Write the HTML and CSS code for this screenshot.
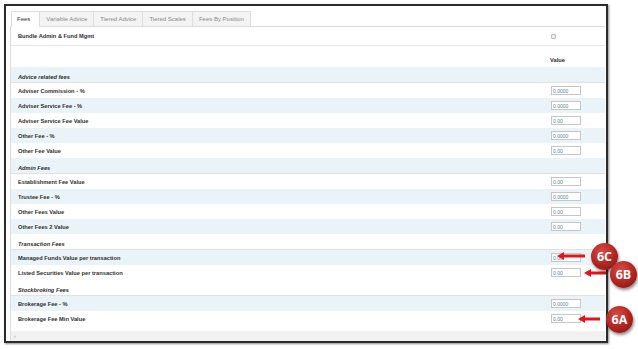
FILE: index.html
```html
<!DOCTYPE html>
<html lang="en">
<head>
    <meta charset="UTF-8">
    <meta name="viewport" content="width=device-width, initial-scale=1.0">
    <title>Fees</title>
    <link rel="stylesheet" href="styles.css">
</head>
<body>
    <div class="frame">
        <ul class="tabs">
            <li class="tab active">Fees</li>
            <li class="tab">Variable Advice</li>
            <li class="tab">Tiered Advice</li>
            <li class="tab">Tiered Scales</li>
            <li class="tab">Fees By Position</li>
        </ul>
        <div class="panel">
            <div class="row top">
                <span class="label">Bundle Admin &amp; Fund Mgmt</span>
                <span class="val"><span class="check"></span></span>
            </div>
            <div class="row colhead">
                <span class="label"></span>
                <span class="val">Value</span>
            </div>

            <!-- Advice -->
            <div class="row group alt"><span class="label">Advice related fees</span></div>
            <div class="row"><span class="label">Adviser Commission - %</span><span class="val"><input type="text" value="0.0000"></span></div>
            <div class="row alt"><span class="label">Adviser Service Fee - %</span><span class="val"><input type="text" value="0.0000"></span></div>
            <div class="row"><span class="label">Adviser Service Fee Value</span><span class="val"><input type="text" value="0.00"></span></div>
            <div class="row alt"><span class="label">Other Fee - %</span><span class="val"><input type="text" value="0.0000"></span></div>
            <div class="row"><span class="label">Other Fee Value</span><span class="val"><input type="text" value="0.00"></span></div>

            <!-- Admin -->
            <div class="row group alt"><span class="label">Admin Fees</span></div>
            <div class="row"><span class="label">Establishment Fee Value</span><span class="val"><input type="text" value="0.00"></span></div>
            <div class="row alt"><span class="label">Trustee Fee - %</span><span class="val"><input type="text" value="0.0000"></span></div>
            <div class="row"><span class="label">Other Fees Value</span><span class="val"><input type="text" value="0.00"></span></div>
            <div class="row alt"><span class="label">Other Fees 2 Value</span><span class="val"><input type="text" value="0.00"></span></div>

            <!-- Transaction -->
            <div class="row group"><span class="label">Transaction Fees</span></div>
            <div class="row alt"><span class="label">Managed Funds Value per transaction</span><span class="val"><input type="text" value="0.00"></span></div>
            <div class="row"><span class="label">Listed Securities Value per transaction</span><span class="val"><input type="text" value="0.00"></span></div>

            <!-- Stockbroking -->
            <div class="row group"><span class="label">Stockbroking Fees</span></div>
            <div class="row alt"><span class="label">Brokerage Fee - %</span><span class="val"><input type="text" value="0.0000"></span></div>
            <div class="row"><span class="label">Brokerage Fee Min Value</span><span class="val"><input type="text" value="0.00"></span></div>

            <div class="spacer"></div>
            <div class="hscroll">&#8249;</div>
        </div>
    </div>

    <!-- callouts -->
    <svg class="arrow arrow-6c" width="28" height="8" viewBox="0 0 28 8"><path d="M0 4 L7 0 L7 2.5 L28 2.5 L28 5.5 L7 5.5 L7 8 Z"/></svg>
    <svg class="arrow arrow-6b" width="22" height="8" viewBox="0 0 22 8"><path d="M0 4 L7 0 L7 2.5 L22 2.5 L22 5.5 L7 5.5 L7 8 Z"/></svg>
    <svg class="arrow arrow-6a" width="22" height="8" viewBox="0 0 22 8"><path d="M0 4 L7 0 L7 2.5 L22 2.5 L22 5.5 L7 5.5 L7 8 Z"/></svg>
    <div class="badge badge-6c">6C</div>
    <div class="badge badge-6b">6B</div>
    <div class="badge badge-6a">6A</div>
</body>
</html>
```

FILE: styles.css
```css
* {
    box-sizing: border-box;
}

body {
    margin: 0;
    padding: 4px;
    background-color: #fff;
    font-family: "Liberation Sans", Arial, sans-serif;
    position: relative;
    height: 349px;
    overflow: hidden;
}

.frame {
    width: 604px;
    height: 339px;
    border: 2px solid #2b2b2b;
    box-shadow: 1px 1px 2px rgba(0, 0, 0, 0.45);
    padding: 5px 1px 0 4px;
    display: flex;
    flex-direction: column;
}

.tabs {
    display: flex;
    list-style: none;
    margin: 0;
    padding: 0 0 0 1px;
    height: 15px;
}

.tab {
    border: 1px solid #ddd;
    border-bottom: none;
    margin-right: -1px;
    background-color: #f3f3f3;
    color: #8a8a8a;
    font-size: 6px;
    line-height: 14px;
    padding: 0 6px;
}

.tab.active {
    background-color: #fff;
    color: #333;
    padding: 0 9px 0 5px;
    height: 16px;
    position: relative;
    z-index: 1;
}

.panel {
    flex: 1;
    border-top: 1px solid #ddd;
    border-left: 1px solid #ddd;
    display: flex;
    flex-direction: column;
}

.row {
    display: grid;
    grid-template-columns: 1fr 55px;
    align-items: center;
    height: 15px;
    font-size: 5.7px;
    font-weight: bold;
    color: #2f2f2f;
}

.row.alt {
    background-color: #e9f3f8;
}

.label {
    padding-left: 7px;
}

.row.top {
    height: 19px;
    border-bottom: 1px solid #e6e6e6;
}

.row.colhead {
    height: 21px;
    align-items: end;
    padding-bottom: 4px;
}

.row.group {
    height: 16px;
    align-items: end;
    padding-bottom: 2px;
    font-style: italic;
    border-bottom: 1px solid #e2e2e2;
}

.check {
    display: block;
    width: 5px;
    height: 5px;
    margin-left: 1px;
    border: 1px solid #bcbcbc;
    border-radius: 1px;
    background-color: #ececec;
}

input[type="text"] {
    display: block;
    width: 30px;
    height: 9px;
    margin: 0 0 0 1px;
    padding: 0 1px;
    border: 1px solid #c6c6c6;
    background-color: #fff;
    font-family: "Liberation Sans", Arial, sans-serif;
    font-size: 5px;
    color: #5b7f95;
}

.spacer {
    flex: 1;
}

.hscroll {
    height: 10px;
    background-color: #f1f1f1;
    color: #aaa;
    font-size: 6px;
    line-height: 10px;
    padding-left: 3px;
}

/* callouts */
.arrow {
    position: absolute;
    fill: #e3141b;
}

.arrow-6c {
    left: 557px;
    top: 252px;
}

.arrow-6b {
    left: 584px;
    top: 269px;
}

.arrow-6a {
    left: 578px;
    top: 315px;
}

.badge {
    position: absolute;
    width: 27px;
    height: 27px;
    border-radius: 50%;
    background: radial-gradient(circle at 40% 32%, #d84a45 0%, #b0241f 55%, #7c1313 100%);
    box-shadow: 1px 2px 3px rgba(0, 0, 0, 0.45);
    color: #fff;
    font-family: "Open Sans", "Liberation Sans", sans-serif;
    font-weight: bold;
    font-size: 12.5px;
    line-height: 27px;
    text-align: center;
}

.badge-6c {
    left: 591px;
    top: 243px;
}

.badge-6b {
    left: 610px;
    top: 261px;
}

.badge-6a {
    left: 606px;
    top: 306px;
}
```
